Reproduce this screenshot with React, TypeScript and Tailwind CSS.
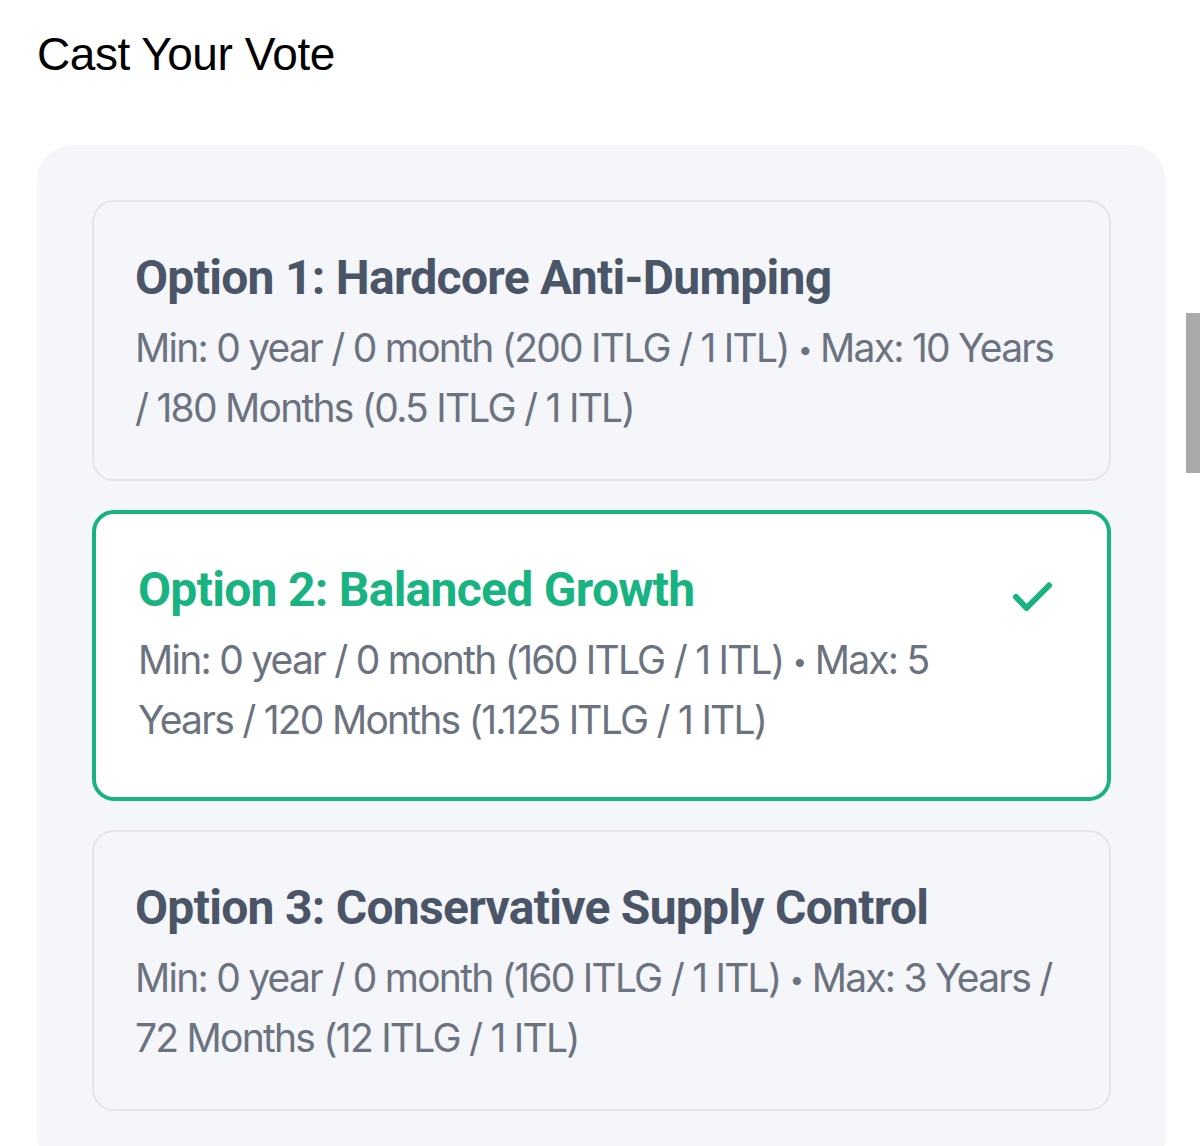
import React from "react";

interface VoteOption {
  id: number;
  title: string;
  min: string;
  max: string;
}

const options: VoteOption[] = [
  {
    id: 1,
    title: "Option 1: Hardcore Anti-Dumping",
    min: "Min: 0 year / 0 month (200 ITLG / 1 ITL)",
    max: "Max: 10 Years / 180 Months (0.5 ITLG / 1 ITL)",
  },
  {
    id: 2,
    title: "Option 2: Balanced Growth",
    min: "Min: 0 year / 0 month (160 ITLG / 1 ITL)",
    max: "Max: 5 Years / 120 Months (1.125 ITLG / 1 ITL)",
  },
  {
    id: 3,
    title: "Option 3: Conservative Supply Control",
    min: "Min: 0 year / 0 month (160 ITLG / 1 ITL)",
    max: "Max: 3 Years / 72 Months (12 ITLG / 1 ITL)",
  },
];

function CheckMark() {
  return (
    <svg width="60" height="48" viewBox="0 0 60 48" fill="none" className="shrink-0 mt-[19px]">
      <path
        d="M9 24 L19.5 35 L42 12.5"
        stroke="#19b382"
        strokeWidth="6"
        strokeLinecap="round"
        strokeLinejoin="round"
      />
    </svg>
  );
}

function OptionCard({ option, selected }: { option: VoteOption; selected: boolean }) {
  return (
    <div
      className={`rounded-[22px] ${
        selected
          ? "border-4 border-[#19b382] bg-white pl-[42px] pr-[40px] pt-[40px] pb-[47px]"
          : "border-2 border-[#e3e5e8] bg-[#f5f6f9] px-[41px] pt-[40px] pb-[41px]"
      }`}
    >
      <div className="flex items-start">
        <div className={`flex-1 ${selected ? "pr-[40px]" : ""}`}>
          <div
            className={`text-[48px] leading-[72px] font-bold font-['Roboto',sans-serif] tracking-[-0.015em] ${
              selected ? "text-[#19b382]" : "text-[#4a5567]"
            }`}
          >
            {option.title}
          </div>
          <div className="mt-1 text-[39px] leading-[60px] text-[#6b7280] font-['Inter',sans-serif] tracking-[-0.045em]">
            <span>{option.min}</span> <span className="text-[26px] leading-none align-[3px]">•</span>{" "}
            <span>{option.max}</span>
          </div>
        </div>
        {selected && <CheckMark />}
      </div>
    </div>
  );
}

export default function App() {
  const selectedId = 2;
  return (
    <div className="relative min-h-[1146px] bg-white overflow-hidden">
      <div className="pl-[37px] pr-[34px] pt-[26px]">
        <h2 className="text-[46px] leading-[56px] text-black font-['Liberation_Sans',sans-serif] tracking-[-0.01em]">
          Cast Your Vote
        </h2>
        <div className="mt-[63px] rounded-[36px] bg-[#f5f6f9] px-[55px] pt-[55px] pb-[60px]">
          <div className="flex flex-col gap-[29px]">
            {options.map((o) => (
              <OptionCard key={o.id} option={o} selected={o.id === selectedId} />
            ))}
          </div>
        </div>
      </div>
      <div className="absolute right-0 top-[313px] h-[160px] w-[14px] bg-[#aaaaaa]" />
    </div>
  );
}
